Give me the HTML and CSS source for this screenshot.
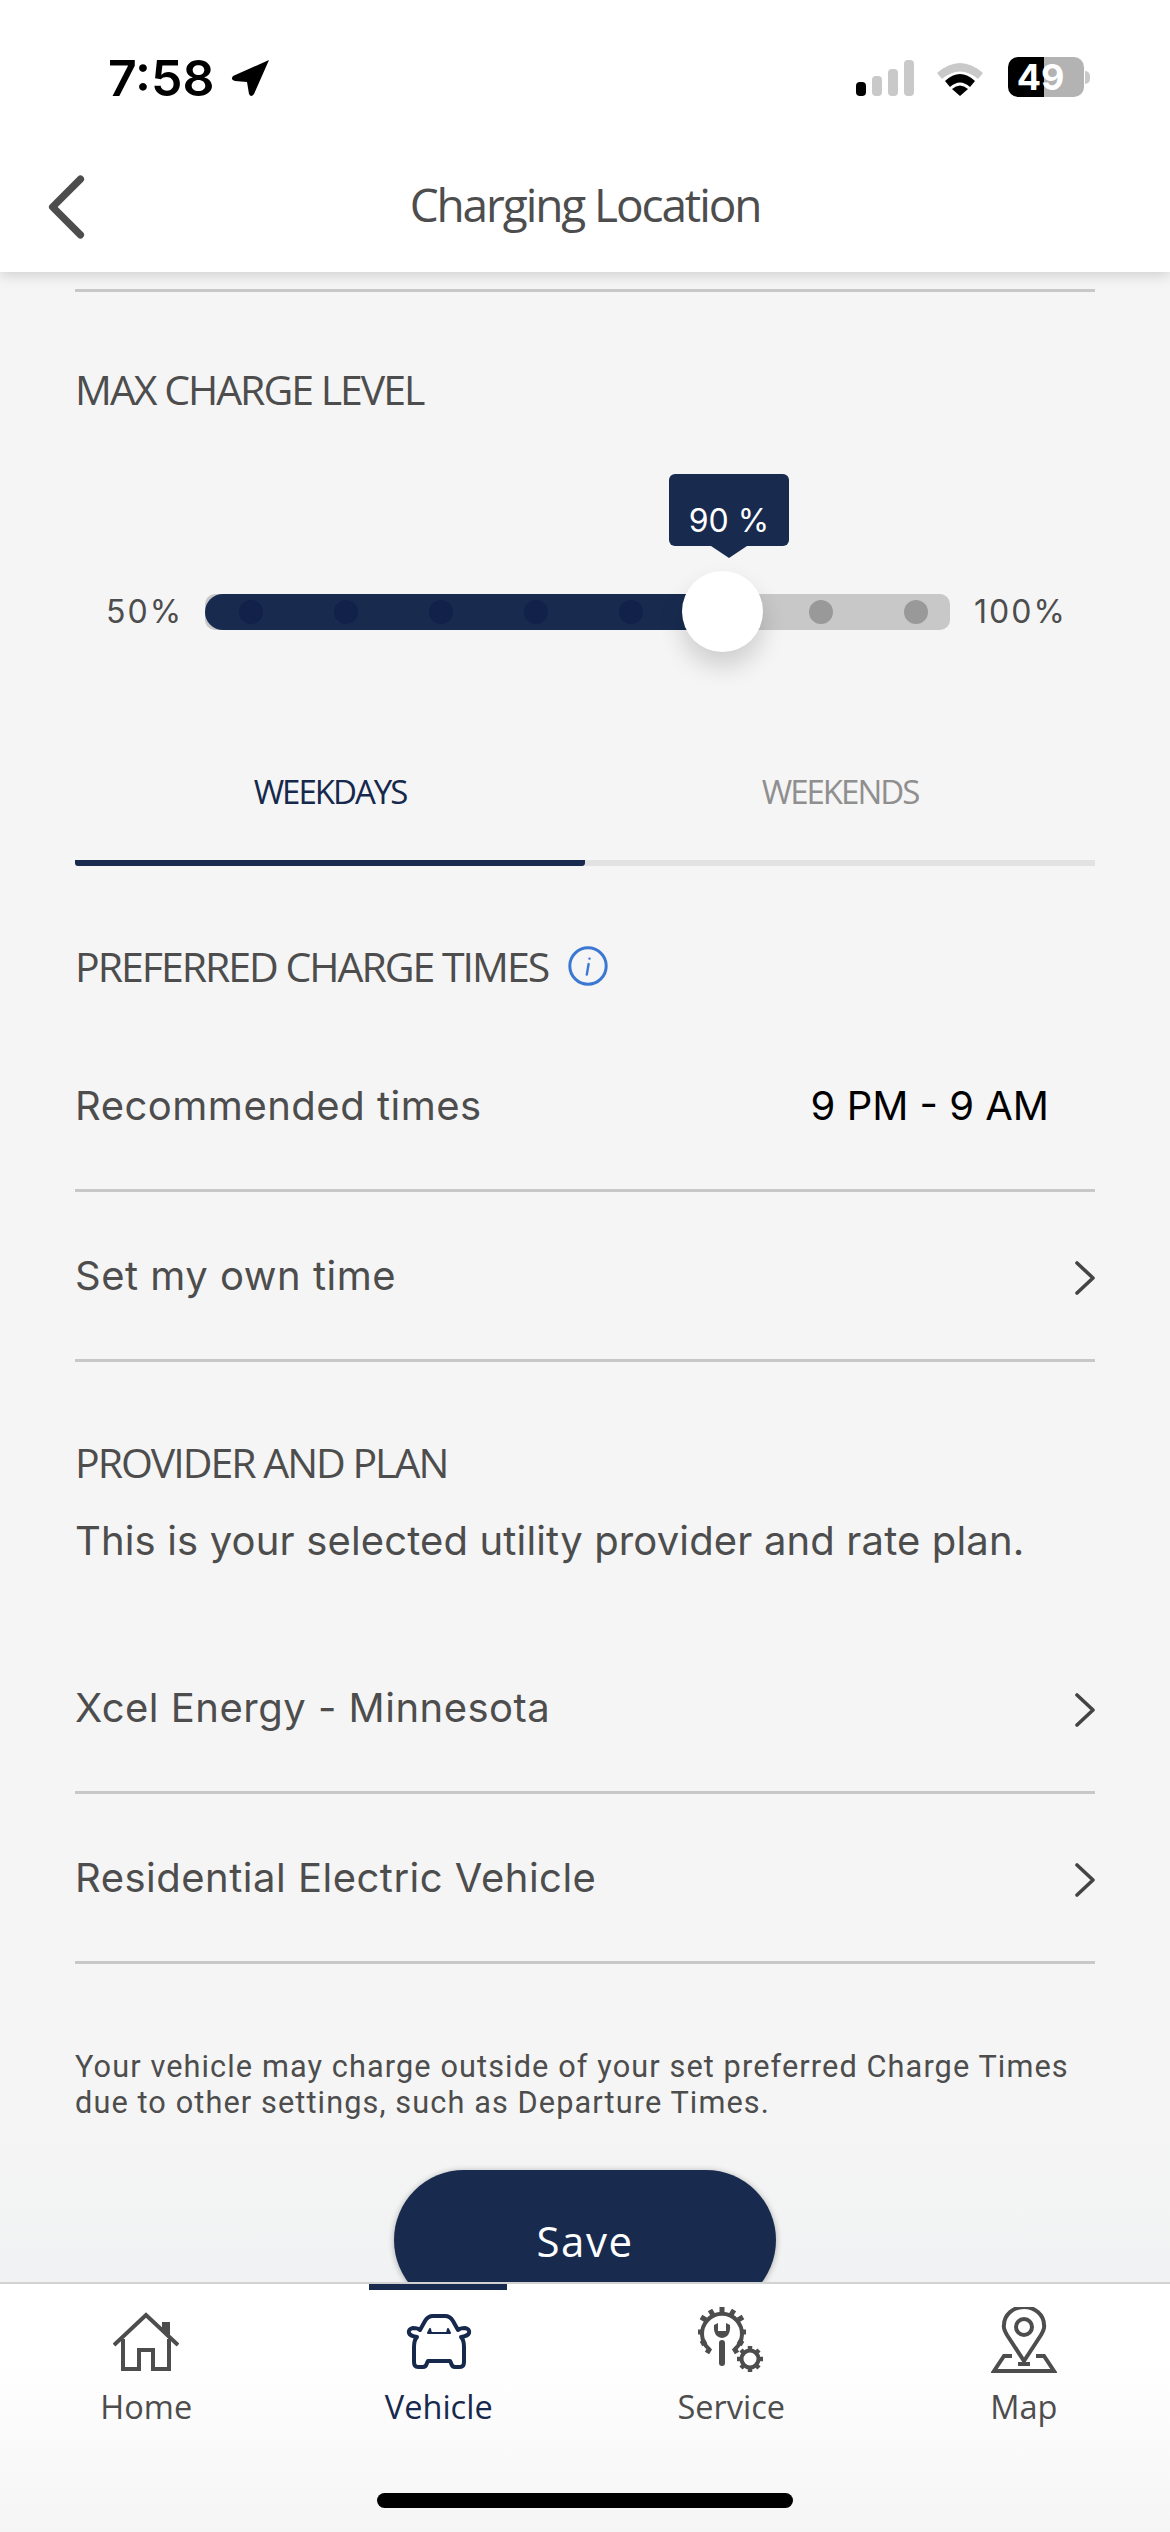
FILE: index.html
```html
<!DOCTYPE html>
<html lang="en">
<head>
    <meta charset="UTF-8">
    <meta name="viewport" content="width=device-width, initial-scale=1.0">
    <title>Charging Location</title>
    <link rel="stylesheet" href="styles.css">
</head>
<body>
    <div class="app">
        <header class="appbar">
            <div class="status">
                <div class="status-left">
                    <span class="clock">7:58</span>
                    <svg class="loc-arrow" viewBox="0 0 39 38"><path d="M38 1 L2 17 Q-1 21 4 22 L16 23 L18 35 Q20 39 23 35 Z" fill="#000"/></svg>
                </div>
                <div class="status-right">
                    <div class="signal">
                        <span class="bar bar-on"></span>
                        <span class="bar bar-2"></span>
                        <span class="bar bar-3"></span>
                        <span class="bar bar-4"></span>
                    </div>
                    <svg class="wifi" viewBox="0 0 50 37">
                        <path d="M2 14 Q25 -6 48 14 L43 20 Q25 5 7 20 Z" fill="#c9c9c9"/>
                        <path d="M10 22 Q25 8 40 22 L35 28 Q25 19 15 28 Z" fill="#000"/>
                        <path d="M17 30 Q25 23 33 30 L25 37 Z" fill="#000"/>
                    </svg>
                    <div class="battery">
                        <div class="battery-body"><span>49</span></div>
                        <span class="battery-cap"></span>
                    </div>
                </div>
            </div>
            <div class="nav">
                <svg class="back" viewBox="0 0 36 62"><path d="M32 4 L5 31 L32 58" fill="none" stroke="#4d4d4d" stroke-width="7" stroke-linecap="round" stroke-linejoin="round"/></svg>
                <h1>Charging Location</h1>
            </div>
        </header>

        <main class="content">
            <div class="top-rule"></div>

            <h2 class="section-title max-title">MAX CHARGE LEVEL</h2>

            <div class="slider">
                <span class="slider-label">50%</span>
                <div class="track">
                    <div class="track-fill"></div>
                    <div class="dots">
                        <span class="dot on"></span>
                        <span class="dot on"></span>
                        <span class="dot on"></span>
                        <span class="dot on"></span>
                        <span class="dot on"></span>
                        <span class="dot hidden"></span>
                        <span class="dot"></span>
                        <span class="dot"></span>
                    </div>
                    <div class="thumb"></div>
                    <div class="bubble">90 %</div>
                </div>
                <span class="slider-label label-end">100%</span>
            </div>

            <div class="tabs">
                <div class="tab active">WEEKDAYS</div>
                <div class="tab">WEEKENDS</div>
            </div>

            <h2 class="section-title pref-title">
                PREFERRED CHARGE TIMES
                <svg class="info" viewBox="0 0 40 40">
                    <circle cx="20" cy="20" r="18.2" fill="none" stroke="#3b78d4" stroke-width="3"/>
                    <path d="M21.4 12.6 L21.6 12.6 M20.6 18 L18.8 28.6" fill="none" stroke="#3b78d4" stroke-width="2.4" stroke-linecap="round"/>
                </svg>
            </h2>

            <div class="row first-row">
                <span>Recommended times</span>
                <span class="row-value">9 PM - 9 AM</span>
            </div>
            <div class="row">
                <span>Set my own time</span>
                <svg class="chev" viewBox="0 0 20 34"><path d="M2 2 L18 17 L2 32" fill="none" stroke="#444" stroke-width="3.6" stroke-linecap="round" stroke-linejoin="round"/></svg>
            </div>

            <h2 class="section-title provider-title">PROVIDER AND PLAN</h2>
            <p class="desc">This is your selected utility provider and rate plan.</p>

            <div class="row provider-row">
                <span>Xcel Energy - Minnesota</span>
                <svg class="chev" viewBox="0 0 20 34"><path d="M2 2 L18 17 L2 32" fill="none" stroke="#444" stroke-width="3.6" stroke-linecap="round" stroke-linejoin="round"/></svg>
            </div>
            <div class="row">
                <span>Residential Electric Vehicle</span>
                <svg class="chev" viewBox="0 0 20 34"><path d="M2 2 L18 17 L2 32" fill="none" stroke="#444" stroke-width="3.6" stroke-linecap="round" stroke-linejoin="round"/></svg>
            </div>

            <p class="note">Your vehicle may charge outside of your set preferred Charge Times<br>due to other settings, such as Departure Times.</p>

            <button class="save">Save</button>
        </main>

        <nav class="tabbar">
            <span class="tab-marker"></span>
            <div class="tabbar-item">
                <svg class="tab-icon" viewBox="0 0 66 66">
                    <path d="M1 38 L33 8 L65 38" fill="none" stroke="#4d4d4d" stroke-width="4"/>
                    <path d="M10 32 V62 H26 V43 H40 V62 H56 V32" fill="none" stroke="#4d4d4d" stroke-width="4"/>
                    <path d="M49 15 H57 V33 L49 25 Z" fill="#4d4d4d"/>
                </svg>
                <span>Home</span>
            </div>
            <div class="tabbar-item current">
                <svg class="tab-icon" viewBox="0 0 66 66">
                    <path d="M14 23 L19 14 Q22 9 27 9 H39 Q44 9 47 14 L52 23 Q54 21 59 21 Q64 22 63 26 Q62 29 55 30 Q58 33 58 40 V55 Q58 60 54 60 H49 Q46 60 45 56 L44 54 H22 L21 56 Q20 60 17 60 H12 Q8 60 8 55 V40 Q8 33 11 30 Q4 29 3 26 Q2 22 7 21 Q12 21 14 23 Z" fill="none" stroke="#16294d" stroke-width="4" stroke-linejoin="round"/>
                    <path d="M22 26 L24 22 L25 26 H41 L42 22 L44 26 Z" fill="#16294d" stroke="#16294d" stroke-width="2" stroke-linejoin="round"/>
                </svg>
                <span>Vehicle</span>
            </div>
            <div class="tabbar-item">
                <svg class="tab-icon" viewBox="0 0 66 66">
                    <path d="M11 42 A20 20 0 1 1 37 42" fill="none" stroke="#4d4d4d" stroke-width="4" stroke-linecap="round"/>
                    <path d="M24 0 V6 M36 3 L33 8 M45 10 L40 13 M48 25 H42 M45 37 L40 34 M12 3 L15 8 M3 10 L8 13 M0 25 H6 M3 37 L8 34 M9 46 L12 41 M39 46 L36 41" fill="none" stroke="#4d4d4d" stroke-width="5"/>
                    <path d="M24 36 V56" fill="none" stroke="#4d4d4d" stroke-width="6" stroke-linecap="round"/>
                    <path d="M16 18 Q15 30 24 31 Q33 30 32 18 L28 16 V24 H20 V16 Z" fill="#4d4d4d"/>
                    <circle cx="52" cy="52" r="8.5" fill="none" stroke="#4d4d4d" stroke-width="4"/>
                    <path d="M52 39 V44 M52 60 V65 M39 52 H44 M60 52 H65 M43 43 L46 46 M58 58 L61 61 M61 43 L58 46 M46 58 L43 61" fill="none" stroke="#4d4d4d" stroke-width="4.5"/>
                </svg>
                <span>Service</span>
            </div>
            <div class="tabbar-item">
                <svg class="tab-icon" viewBox="0 0 66 66">
                    <path d="M33 54 L16 28 Q12 21 13 18 A20 18 0 0 1 53 18 Q54 21 50 28 Z" fill="none" stroke="#4d4d4d" stroke-width="4" stroke-linejoin="round"/>
                    <circle cx="33" cy="20" r="8" fill="none" stroke="#4d4d4d" stroke-width="4"/>
                    <path d="M21 49 H13 L3 64 H63 L53 49 H45 M27 57 H39" fill="none" stroke="#4d4d4d" stroke-width="4"/>
                </svg>
                <span>Map</span>
            </div>
            <div class="home-bar"></div>
        </nav>
    </div>
</body>
</html>
```

FILE: styles.css
```css
* {
    box-sizing: border-box;
}

body {
    margin: 0;
    padding: 0;
    font-family: Inter, "Open Sans", sans-serif;
    color: #4d4d4d;
    background-color: #f5f5f5;
}

.app {
    width: 1170px;
    height: 2532px;
    display: flex;
    flex-direction: column;
    overflow: hidden;
}

/* top bar */
.appbar {
    height: 272px;
    background-color: #fff;
    box-shadow: 0 2px 14px rgba(0, 0, 0, 0.18);
    position: relative;
    z-index: 2;
    flex-shrink: 0;
}

.status {
    height: 120px;
    padding: 57px 80px 0 108px;
    display: flex;
    justify-content: space-between;
    align-items: flex-start;
}

.status-left {
    display: flex;
    align-items: center;
    gap: 16px;
}

.clock {
    font-family: Inter, sans-serif;
    font-size: 50px;
    line-height: 42px;
    font-weight: 600;
    color: #000;
}

.loc-arrow {
    width: 39px;
    height: 38px;
}

.status-right {
    display: flex;
    align-items: flex-start;
}

.signal {
    display: flex;
    align-items: flex-end;
    gap: 6px;
    height: 39px;
    width: 58px;
    margin-right: 21px;
    padding-top: 2px;
}

.bar {
    width: 10px;
    border-radius: 4px;
    background-color: #c9c9c9;
}

.bar-on {
    height: 14px;
    background-color: #000;
}

.bar-2 {
    height: 20px;
}

.bar-3 {
    height: 27px;
}

.bar-4 {
    height: 36px;
}

.wifi {
    width: 50px;
    height: 37px;
    margin-top: 2px;
    margin-right: 23px;
}

.battery {
    display: flex;
    align-items: center;
}

.battery-body {
    width: 76px;
    height: 40px;
    border-radius: 10px;
    background: linear-gradient(90deg, #000 36px, #b3b3b3 36px);
    color: #fff;
    font-size: 36px;
    line-height: 40px;
    font-weight: 700;
    text-align: center;
    padding-right: 11px;
}

.battery-cap {
    width: 5px;
    height: 13px;
    margin-left: 1px;
    border-radius: 0 5px 5px 0;
    background-color: #c9c9c9;
}

.nav {
    height: 152px;
    position: relative;
    display: flex;
    align-items: center;
    justify-content: center;
}

.back {
    position: absolute;
    left: 46px;
    top: 55px;
    width: 40px;
    height: 64px;
}

.nav h1 {
    margin: 0;
    padding-top: 16px;
    font-family: "Open Sans", sans-serif;
    font-size: 46px;
    font-weight: 400;
    letter-spacing: -2.1px;
    color: #4d4d4d;
}

/* scrolling part */
.content {
    flex: 1;
    padding: 0 75px;
    position: relative;
    overflow: hidden;
    background: linear-gradient(180deg, #f5f5f5 1850px, #f1f2f3 2010px);
}

.top-rule {
    height: 3px;
    margin-top: 17px;
    background-color: #c8c8c8;
}

.section-title {
    margin: 0;
    height: 60px;
    line-height: 60px;
    font-family: "Open Sans", sans-serif;
    font-size: 41px;
    font-weight: 400;
    letter-spacing: -2px;
    color: #4d4d4d;
    white-space: nowrap;
}

.max-title {
    margin-top: 67px;
}

.slider {
    display: grid;
    grid-template-columns: 99px 745px auto;
    align-items: center;
    height: 81px;
    margin-top: 152px;
    padding-left: 31px;
}

.slider-label {
    font-size: 32px;
    letter-spacing: 2px;
    color: #4d4d4d;
}

.label-end {
    padding-left: 24px;
}

.track {
    height: 36px;
    position: relative;
    border-radius: 10px;
    background-color: #c8c8c8;
}

.track-fill {
    position: absolute;
    left: 0;
    top: 0;
    bottom: 0;
    width: 70%;
    border-radius: 18px 0 0 18px;
    background-color: #182b4f;
}

.dots {
    position: absolute;
    left: 34px;
    right: 22px;
    top: 6px;
    display: flex;
    justify-content: space-between;
}

.dot {
    width: 24px;
    height: 24px;
    border-radius: 50%;
    background-color: #999;
}

.dot.on {
    background-color: #11214a;
}

.dot.hidden {
    visibility: hidden;
}

.thumb {
    position: absolute;
    left: 477px;
    top: -23px;
    width: 81px;
    height: 81px;
    border-radius: 50%;
    background-color: #fff;
    box-shadow: 0 14px 24px rgba(0, 0, 0, 0.16);
}

.bubble {
    position: absolute;
    left: 464px;
    top: -120px;
    width: 120px;
    height: 72px;
    padding-top: 29px;
    border-radius: 6px;
    background-color: #182b4f;
    color: #fff;
    font-size: 32px;
    line-height: 36px;
    text-align: center;
}

.bubble::after {
    content: "";
    position: absolute;
    left: 42px;
    top: 72px;
    border-left: 18px solid transparent;
    border-right: 18px solid transparent;
    border-top: 12px solid #182b4f;
}

.tabs {
    display: grid;
    grid-template-columns: 1fr 1fr;
    margin-top: 69px;
}

.tab {
    height: 145px;
    line-height: 141px;
    text-align: center;
    border-bottom: 6px solid #e2e2e2;
    font-family: "Open Sans", sans-serif;
    font-size: 33px;
    letter-spacing: -2px;
    color: #8f8f8f;
}

.tab.active {
    color: #16294d;
    border-bottom-color: #182b4f;
    border-radius: 0 0 3px 3px;
}

.pref-title {
    margin-top: 70px;
    display: flex;
    align-items: center;
    gap: 20px;
}

.info {
    width: 40px;
    height: 40px;
}

.row {
    height: 170px;
    border-bottom: 3px solid #c8c8c8;
    display: flex;
    align-items: center;
    justify-content: space-between;
    font-size: 40px;
    letter-spacing: 0.5px;
    color: #4d4d4d;
}

.first-row {
    margin-top: 26px;
}

.row-value {
    color: #000;
    margin-right: 46px;
    letter-spacing: 0;
}

.chev {
    width: 20px;
    height: 34px;
    margin-top: 4px;
}

.provider-title {
    margin-top: 70px;
}

.desc {
    margin: 19px 0 0;
    height: 60px;
    line-height: 60px;
    font-size: 40px;
    letter-spacing: 0.15px;
    white-space: nowrap;
}

.provider-row {
    margin-top: 53px;
}

.note {
    margin: 85px 0 0;
    font-family: Roboto, sans-serif;
    font-size: 30.7px;
    line-height: 36px;
    letter-spacing: 1.1px;
    white-space: nowrap;
}

.save {
    position: absolute;
    left: 394px;
    top: 1898px;
    width: 382px;
    height: 140px;
    border: none;
    border-radius: 70px;
    padding: 0;
    background-color: #182b4f;
    box-shadow: 0 1px 6px rgba(0, 0, 0, 0.3);
    color: #fff;
    font-family: "Open Sans", sans-serif;
    font-size: 42px;
    letter-spacing: 1.5px;
}

/* bottom tabs */
.tabbar {
    height: 250px;
    flex-shrink: 0;
    position: relative;
    z-index: 1;
    border-top: 2px solid #d2d2d2;
    background: linear-gradient(180deg, #fff 30%, #f5f5f5 100%);
    display: grid;
    grid-template-columns: repeat(4, 1fr);
    align-items: start;
    padding-top: 23px;
}

.tab-marker {
    position: absolute;
    left: 369px;
    top: 0;
    width: 138px;
    height: 6px;
    background-color: #182b4f;
}

.tabbar-item {
    display: flex;
    flex-direction: column;
    align-items: center;
    font-family: "Open Sans", sans-serif;
    font-size: 32.5px;
    line-height: 44px;
    color: #4d4d4d;
}

.tabbar-item.current {
    color: #16294d;
}

.tab-icon {
    width: 66px;
    height: 66px;
    margin-bottom: 12px;
}

.home-bar {
    position: absolute;
    left: 377px;
    top: 209px;
    width: 416px;
    height: 15px;
    border-radius: 8px;
    background-color: #000;
}
```
